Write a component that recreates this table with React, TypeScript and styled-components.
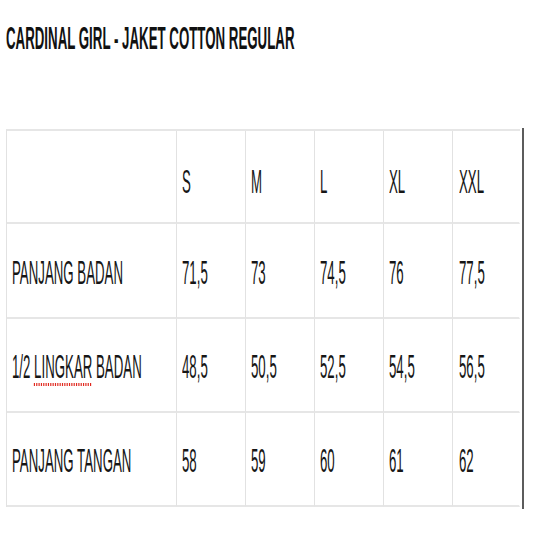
import React from 'react';
import styled, { createGlobalStyle } from 'styled-components';

const GlobalStyle = createGlobalStyle`
  html, body {
    margin: 0;
    padding: 0;
    background: #ffffff;
  }
  body {
    font-family: "Liberation Sans", Arial, sans-serif;
    color: #161616;
  }
`;

const Page = styled.div`
  width: 533px;
  height: 533px;
  padding: 22px 0 0 6px;
  box-sizing: border-box;
  overflow: hidden;
`;

const Title = styled.h1`
  margin: 0 0 75px;
  height: 32px;
  font-size: 32px;
  line-height: 32px;
  font-weight: 700;
  color: #111;
  white-space: nowrap;

  span {
    display: inline-block;
    transform: scaleX(0.415);
    transform-origin: left center;
  }
`;

const TableWrap = styled.div`
  display: flex;
  align-items: stretch;
  gap: 2px;
`;

const SizeTable = styled.div`
  display: grid;
  grid-template-columns: 170px repeat(4, 69px) 67px;
  grid-template-rows: 93px 95px 94px 94px;
  border-left: 1px solid #e2e2e2;
  border-top: 2px solid #e6e6e6;
`;

const Cell = styled.div<{ $last?: boolean }>`
  display: flex;
  align-items: center;
  padding-left: ${p => (p.$last ? 6 : 5)}px;
  box-sizing: border-box;
  border-right: 1px solid ${p => (p.$last ? 'transparent' : '#e2e2e2')};
  border-bottom: 2px solid #e6e6e6;
  overflow: visible;
  white-space: nowrap;
`;

const CellText = styled.span<{ $head?: boolean }>`
  display: inline-block;
  font-size: 34px;
  line-height: 34px;
  transform: scaleX(0.39);
  transform-origin: left center;
  margin-top: ${p => (p.$head ? 9 : 2)}px;
`;

const Misspelled = styled.span`
  text-decoration: underline dotted #e0281e;
  text-decoration-thickness: 3px;
  text-underline-offset: 5px;
`;

const EdgeLine = styled.div`
  width: 2px;
  margin-top: -1px;
  margin-bottom: -2px;
  background: #5c5c5c;
`;

const sizes = ['S', 'M', 'L', 'XL', 'XXL'];

const rows: { label: React.ReactNode; values: string[] }[] = [
  { label: 'PANJANG BADAN', values: ['71,5', '73', '74,5', '76', '77,5'] },
  {
    label: (
      <>
        1/2 <Misspelled>LINGKAR</Misspelled> BADAN
      </>
    ),
    values: ['48,5', '50,5', '52,5', '54,5', '56,5'],
  },
  { label: 'PANJANG TANGAN', values: ['58', '59', '60', '61', '62'] },
];

const App: React.FC = () => {
  return (
    <Page>
      <GlobalStyle />
      <Title>
        <span>CARDINAL GIRL - JAKET COTTON REGULAR</span>
      </Title>

      <TableWrap>
        <SizeTable>
          <Cell />
          {sizes.map((s, i) => (
            <Cell key={s} $last={i === sizes.length - 1}>
              <CellText $head>{s}</CellText>
            </Cell>
          ))}

          {rows.map((row, r) => (
            <React.Fragment key={r}>
              <Cell>
                <CellText>{row.label}</CellText>
              </Cell>
              {row.values.map((v, i) => (
                <Cell key={i} $last={i === row.values.length - 1}>
                  <CellText>{v}</CellText>
                </Cell>
              ))}
            </React.Fragment>
          ))}
        </SizeTable>
        <EdgeLine />
      </TableWrap>
    </Page>
  );
};

export default App;
